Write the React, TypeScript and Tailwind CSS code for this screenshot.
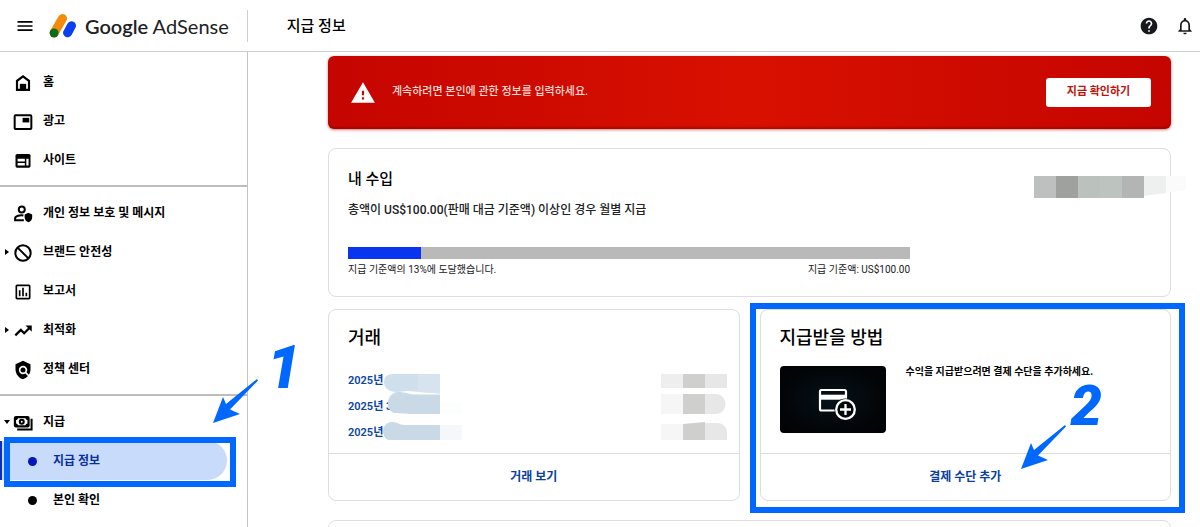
import type { ReactNode } from 'react'
import {
  MdHelp,
  MdMenu,
  MdNotificationsNone,
  MdOutlineAssessment,
  MdPolicy,
  MdWarning,
} from 'react-icons/md'

type NavEntry = {
  label: string
  icon?: ReactNode
  caret?: 'right' | 'down'
  child?: boolean
  active?: boolean
}

function HomeIcon() {
  return (
    <svg className="size-5" viewBox="0 0 24 24" fill="currentColor" aria-hidden="true">
      <path d="M12 2.300 3.500 8.800v12.700h17V8.800L12 2.300Zm5.900 16.600h-2.100v-5.600H8.200v5.600H6.100V10.100L12 5.600l5.900 4.500v8.800Z" />
      <path d="M8.500 13h7v8h-7z" />
    </svg>
  )
}

function AdsIcon() {
  return (
    <svg className="size-5" viewBox="0 0 24 24" aria-hidden="true">
      <rect x="2" y="4" width="20" height="16.500" rx="1" fill="none" stroke="currentColor" strokeWidth="2.400" />
      <rect x="11.500" y="7" width="8" height="5.500" fill="currentColor" />
    </svg>
  )
}

function SitesIcon() {
  return (
    <svg className="size-5" viewBox="0 0 24 24" aria-hidden="true">
      <rect x="3" y="3.500" width="18" height="16.500" rx="2" fill="currentColor" />
      <path d="M5.500 9.300h8.700v3.200H5.500zM5.500 14.300h8.700v3.200H5.500zM16 9.300h2.700v8.200H16z" fill="#fff" />
    </svg>
  )
}

function PrivacyIcon() {
  return (
    <svg className="size-5" viewBox="0 0 24 24" aria-hidden="true">
      <circle cx="10.500" cy="6.500" r="3.600" fill="none" stroke="currentColor" strokeWidth="2.400" />
      <path
        d="M12.500 13.700c-4-.9-10 .6-10 3.600v2.200h10.500"
        fill="none"
        stroke="currentColor"
        strokeWidth="2.400"
      />
      <path d="M18.500 10.500 14 12.500v3.500c0 3 1.900 5.300 4.500 6 2.600-.7 4.500-3 4.500-6v-3.500l-4.500-2Z" fill="currentColor" />
    </svg>
  )
}

function BlockIcon() {
  return (
    <svg className="size-5" viewBox="0 0 24 24" fill="none" stroke="currentColor" strokeWidth="2.400" aria-hidden="true">
      <circle cx="12" cy="12" r="9.200" />
      <path d="m5.500 5.500 13 13" />
    </svg>
  )
}

function TrendIcon() {
  return (
    <svg className="size-5" viewBox="0 0 24 24" aria-hidden="true">
      <path d="m2.800 17.300 6.600-6.600 4 4 6.600-6.600" fill="none" stroke="currentColor" strokeWidth="2.700" />
      <path d="M15 5.500h7.500V13z" fill="currentColor" />
    </svg>
  )
}

function PaymentsIcon() {
  return (
    <svg className="size-5" viewBox="0 0 24 24" aria-hidden="true">
      <rect x="1" y="3.500" width="19" height="14" rx="2.500" fill="currentColor" />
      <path d="M6 6.300h9c.3 1.500 1.200 2 2.300 2.200v4c-1.100.2-2 .8-2.300 2.200H6c-.3-1.400-1.200-2-2.300-2.200v-4C4.800 8.300 5.700 7.800 6 6.300Z" fill="#fff" />
      <circle cx="10.500" cy="10.500" r="3.600" fill="currentColor" />
      <circle cx="10.500" cy="10.500" r="1.100" fill="#fff" />
      <path d="M22.300 7v12.700H5" fill="none" stroke="currentColor" strokeWidth="2.400" />
    </svg>
  )
}

const navSections: NavEntry[][] = [
  [
    { label: '홈', icon: <HomeIcon /> },
    { label: '광고', icon: <AdsIcon /> },
    { label: '사이트', icon: <SitesIcon /> },
  ],
  [
    { label: '개인 정보 보호 및 메시지', icon: <PrivacyIcon /> },
    { label: '브랜드 안전성', icon: <BlockIcon />, caret: 'right' },
    { label: '보고서', icon: <MdOutlineAssessment className="size-5" /> },
    { label: '최적화', icon: <TrendIcon />, caret: 'right' },
    { label: '정책 센터', icon: <MdPolicy className="size-5" /> },
  ],
  [
    { label: '지급', icon: <PaymentsIcon />, caret: 'down' },
    { label: '지급 정보', child: true, active: true },
    { label: '본인 확인', child: true },
  ],
]

function Logo() {
  return (
    <a href="#" className="flex items-center gap-2">
      <svg className="h-[26px] w-7" viewBox="0 0 28 26" aria-hidden="true">
        <path d="M13.500 5.500 5.200 19.800" stroke="#f28b0c" strokeWidth="9" strokeLinecap="round" />
        <path d="M22.500 12.700 18.600 19.800" stroke="#0b3ff0" strokeWidth="9" strokeLinecap="round" />
        <circle cx="5.100" cy="20" r="4.500" fill="#0c6b16" />
      </svg>
      <span className="font-['Lato'] text-xl text-[#202124]">
        <span className="font-semibold">Google</span> AdSense
      </span>
    </a>
  )
}

function NavRow({ entry }: { entry: NavEntry }) {
  if (entry.child) {
    return (
      <li className="relative">
        <a
          href="#"
          className={
            entry.active
              ? 'mr-5 flex h-[39px] items-center rounded-r-full border-l-2 border-[#0b2fc0] bg-[#c8dbfa] text-[#0a2f9c]'
              : 'mr-5 flex h-[39px] items-center border-l-2 border-transparent'
          }
        >
          <span
            className={
              entry.active
                ? 'mt-[2px] ml-[26px] size-[9px] rounded-full bg-[#0517b8]'
                : 'mt-[2px] ml-[26px] size-[9px] rounded-full bg-black'
            }
          />
          <span className="ml-4">{entry.label}</span>
        </a>
        {entry.active && (
          <span className="pointer-events-none absolute -top-1 right-[11px] -bottom-[7px] left-1 border-6 border-[#0068ff]" />
        )}
      </li>
    )
  }

  return (
    <li>
      <a href="#" className="flex h-[39px] items-center">
        <span className="flex w-[13px] justify-center">
          {entry.caret === 'right' && (
            <svg className="h-2 w-1" viewBox="0 0 4 8" aria-hidden="true">
              <path d="M0 1v6l4-3z" />
            </svg>
          )}
          {entry.caret === 'down' && (
            <svg className="h-1 w-2" viewBox="0 0 8 4" aria-hidden="true">
              <path d="M1 0h6L4 4z" />
            </svg>
          )}
        </span>
        <span className="mt-[2px] flex">{entry.icon}</span>
        <span className="ml-[10px]">{entry.label}</span>
      </a>
    </li>
  )
}

function Sidebar() {
  return (
    <nav className="w-[248px] shrink-0 border-r border-[#c4c4c4] pt-1 text-xs font-bold text-black">
      {navSections.map((section, index) => (
        <ul key={index} className="border-b-2 border-[#bdbdbd] py-[6px] last:border-b-0">
          {section.map((entry) => (
            <NavRow key={entry.label} entry={entry} />
          ))}
        </ul>
      ))}
    </nav>
  )
}

function AlertBanner() {
  return (
    <section className="flex h-[73px] items-center rounded-md bg-linear-to-r from-[#c50500] via-[#d81000] to-[#c50500] pr-5 pl-[22px] shadow-[inset_0_-2px_2px_rgba(120,0,0,0.4),0_1px_3px_rgba(150,0,0,0.5)]">
      <MdWarning className="size-[26px] text-white" />
      <p className="ml-4 flex-1 text-[11px] font-medium text-[#ffd9d2]">계속하려면 본인에 관한 정보를 입력하세요.</p>
      <button
        type="button"
        className="h-[29px] w-[105px] rounded-[3px] bg-white text-[11px] font-bold text-[#c01208]"
      >
        지금 확인하기
      </button>
    </section>
  )
}

function EarningsCard() {
  return (
    <section className="relative mt-[19px] rounded-lg border border-[#dedede] px-[19px] pt-[18px] pb-[18px]">
      <h2 className="text-[15px] leading-6 font-medium text-black">내 수입</h2>
      <p className="mt-[9px] text-xs leading-5 font-medium text-[#202124]">
        총액이 US$100.00(판매 대금 기준액) 이상인 경우 월별 지급
      </p>
      <div className="mt-[27px] w-[70%]">
        <div className="h-3 bg-[#b9b9b9]">
          <div className="h-3 w-[13%] bg-[#0a35f0]" />
        </div>
        <div className="mt-[3px] flex justify-between text-[10px] leading-4 text-[#202124]">
          <span>지급 기준액의 13%에 도달했습니다.</span>
          <span>지급 기준액: US$100.00</span>
        </div>
      </div>
      {/* masked balance */}
      <svg className="absolute top-[27px] -right-4 h-[22px] w-[152px]" viewBox="0 0 152 22" aria-hidden="true">
        <path d="M0 0h22v22H0z" fill="#bdc0be" />
        <path d="M22 0h22v22H22z" fill="#9fa19f" />
        <path d="M44 0h22v22H44z" fill="#bbc1bd" />
        <path d="M66 0h22v22H66z" fill="#bdc3bf" />
        <path d="M88 0h22v22H88z" fill="#b3b5b4" />
        <path d="M110 0h22v17l-22 3z" fill="#eeefef" />
        <path d="M132 0h20v14l-20 3z" fill="#fbfbfb" />
      </svg>
    </section>
  )
}

function TransactionsCard() {
  return (
    <section className="flex flex-col rounded-lg border border-[#dedede]">
      <div className="relative flex-1 px-[19px] pt-[14px] pb-[6px]">
        <h2 className="text-lg leading-7 font-medium text-black">거래</h2>
        <ul className="mt-4 text-[11px] leading-[26px] font-semibold text-[#0b45a5]">
          <li>2025년</li>
          <li>2025년 3</li>
          <li>2025년</li>
        </ul>
        {/* masked dates */}
        <svg className="absolute top-16 left-[54px] h-[68px] w-20" viewBox="0 0 80 68" aria-hidden="true">
          <path d="M10 0h47v19.500L24 17l-10 1C5 18 1 13 1 8 1 3 4 0 10 0Z" fill="#cfdfeb" />
          <path d="M35 0h22v19.500L35 18z" fill="#d7e3ee" />
          <path d="M14 18c7-.5 12 2.500 20 2.500h23V40H30c-8 0-15-1-19-1-9-3-8-19 3-21Z" fill="#c9dae6" />
          <path d="M57 29h22v11H57z" fill="#fcfdfd" />
          <path d="M9 48c6 0 7 3 12 3h36v15H6C-2 64-3 49 9 48Z" fill="#c9dae6" />
          <path d="M57 51h22v15H57z" fill="#f5f8fa" />
        </svg>
        {/* masked amounts */}
        <svg className="absolute top-16 right-3 h-[68px] w-[67px]" viewBox="0 0 67 68" aria-hidden="true">
          <path d="M1 0h22v14H1z" fill="#eee" />
          <path d="M23 0h22v14H23zM23 20h22v20H23zM23 50l22-2v18H23z" fill="#cfcfcd" />
          <path d="M45 0h22v14H45zM45 20h10c14 0 14 20 0 20H45zM45 49h12c6 0 10 4 10 9v8H45z" fill="#e7e7e7" />
          <path d="M1 20h22v20H1zM1 50h22v16H1z" fill="#f6f6f6" />
        </svg>
      </div>
      <a
        href="#"
        className="flex h-[47px] items-center justify-center border-t border-[#dedede] text-xs font-bold text-[#0a3f9f]"
      >
        거래 보기
      </a>
    </section>
  )
}

function PayoutCard() {
  return (
    <section className="relative flex flex-col rounded-lg border border-[#dedede]">
      <div className="flex-1 px-[19px] pt-[14px] pb-5">
        <h2 className="text-lg leading-7 font-medium text-black">지급받을 방법</h2>
        <div className="mt-[14px] flex gap-5">
          <div className="flex h-[67px] w-[106px] items-center justify-center rounded bg-radial from-[#071319] to-[#010203]">
            <svg className="mt-2 ml-2 h-8 w-[38px]" viewBox="0 0 38 32" fill="none" stroke="#fff" aria-hidden="true">
              <path d="M17 22.500H3.500A1.500 1.500 0 0 1 2 21V3.500A1.500 1.500 0 0 1 3.500 2h23A1.500 1.500 0 0 1 28 3.500V11" strokeWidth="2.200" />
              <path d="M2 9.200h26" strokeWidth="5" />
              <circle cx="27.500" cy="21.500" r="11" fill="#04090c" stroke="none" />
              <circle cx="27.500" cy="21.500" r="9.300" strokeWidth="2.300" />
              <path d="M27.500 16v11M22 21.500h11" strokeWidth="2.300" />
            </svg>
          </div>
          <p className="text-[10px] leading-3 font-bold text-black">수익을 지급받으려면 결제 수단을 추가하세요.</p>
        </div>
      </div>
      <a
        href="#"
        className="flex h-[47px] items-center justify-center border-t border-[#dedede] text-xs font-bold text-[#0a3f9f]"
      >
        결제 수단 추가
      </a>
      <span className="pointer-events-none absolute -top-[7px] -right-[15px] -bottom-[13px] -left-[11px] border-6 border-[#0068ff]" />
      <Callout className="absolute right-[68px] bottom-[30px] gap-1" stepClassName="mb-9 text-[56px]" step="2" />
    </section>
  )
}

type CalloutProps = {
  step: string
  className: string
  stepClassName: string
}

function Callout({ step, className, stepClassName }: CalloutProps) {
  return (
    <div className={`pointer-events-none flex items-end text-[#0068ff] ${className}`}>
      <svg className="h-[46px] w-[46px]" viewBox="0 0 46 46" fill="currentColor" aria-hidden="true">
        <path d="M0 45 10 19l3 7L44 1l1 1.500L17 31.500l10 4.500z" />
      </svg>
      <span className={`font-['Roboto'] leading-14 font-black italic ${stepClassName}`}>{step}</span>
    </div>
  )
}

export default function App() {
  return (
    <div className="flex h-screen flex-col overflow-hidden bg-white font-['Roboto','Noto_Sans_CJK_KR',sans-serif]">
      <header className="flex h-[52px] shrink-0 items-center border-b border-[#cfcfcf] pr-[5px] pl-[15px]">
        <button type="button" aria-label="메뉴" className="mr-[14px]">
          <MdMenu className="size-5" />
        </button>
        <Logo />
        <div className="flex flex-1 items-center">
          <h1 className="ml-[18px] border-l border-[#cfcfcf] pl-[39px] text-[15px] leading-8 font-medium text-black">
            지급 정보
          </h1>
        </div>
        <div className="flex gap-4 text-[#17191c]">
          <button type="button" aria-label="도움말">
            <MdHelp className="size-5" />
          </button>
          <button type="button" aria-label="알림">
            <MdNotificationsNone className="size-5" />
          </button>
        </div>
      </header>

      <div className="relative flex min-h-0 flex-1">
        <Sidebar />
        <main className="min-w-0 flex-1 overflow-hidden pt-1 pr-[29px] pl-20">
          <AlertBanner />
          <EarningsCard />
          <div className="mt-3 grid grid-cols-2 gap-5">
            <TransactionsCard />
            <PayoutCard />
          </div>
          <section className="mt-[19px] h-40 rounded-lg border border-[#dedede]" />
        </main>
        <Callout className="absolute bottom-[103px] left-[213px] gap-2" stepClassName="mb-7 text-[60px]" step="1" />
      </div>
    </div>
  )
}
